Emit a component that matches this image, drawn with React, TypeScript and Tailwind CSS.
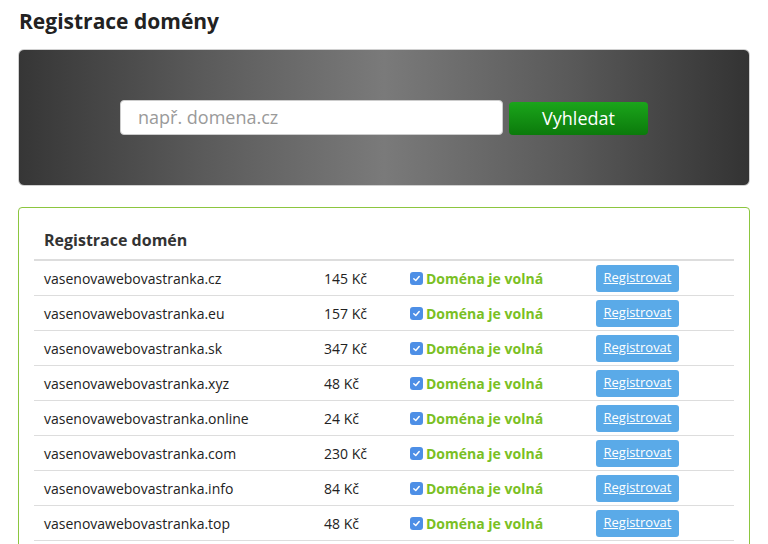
import React from 'react';

interface DomainRow {
  name: string;
  price: string;
}

const rows: DomainRow[] = [
  { name: 'vasenovawebovastranka.cz', price: '145 Kč' },
  { name: 'vasenovawebovastranka.eu', price: '157 Kč' },
  { name: 'vasenovawebovastranka.sk', price: '347 Kč' },
  { name: 'vasenovawebovastranka.xyz', price: '48 Kč' },
  { name: 'vasenovawebovastranka.online', price: '24 Kč' },
  { name: 'vasenovawebovastranka.com', price: '230 Kč' },
  { name: 'vasenovawebovastranka.info', price: '84 Kč' },
  { name: 'vasenovawebovastranka.top', price: '48 Kč' },
];

const CheckBox: React.FC = () => (
  <span className="inline-flex h-[13px] w-[13px] items-center justify-center rounded-[3px] bg-[#4d8fe6]">
    <svg width="9" height="9" viewBox="0 0 10 10" fill="none">
      <path d="M2 5.2 L4.2 7.3 L8 2.8" stroke="white" strokeWidth="1.6" strokeLinecap="round" strokeLinejoin="round" />
    </svg>
  </span>
);

const App: React.FC = () => {
  return (
    <div className="min-h-[544px] bg-white px-[18px] font-['Open_Sans',sans-serif] text-[#222]">
      {/* Title */}
      <h1 className="pt-[5px] pl-px text-[21px] font-bold leading-[32px] text-[#222]">Registrace domény</h1>

      {/* Search box */}
      <div className="mt-[12px] flex h-[137px] items-center justify-center rounded-[6px] border border-[#d0d0d0] bg-[linear-gradient(to_right,#363636,#5a5a5a_25%,#7a7a7a_50%,#5a5a5a_75%,#333333)]">
        <div className="flex items-end gap-[6px]">
          <div className="flex h-[35px] w-[383px] items-center rounded-[4px] border border-[#ccc] bg-white pl-[17px] text-[18px] text-[#9a9a9a]">
            např. domena.cz
          </div>
          <button className="h-[33px] w-[139px] rounded-[4px] bg-[linear-gradient(to_bottom,#1ba51b,#0b7a0b)] text-[18px] text-white">
            Vyhledat
          </button>
        </div>
      </div>

      {/* Results panel */}
      <div className="mt-[21px] rounded-[4px] border border-[#8cc63f] px-[15px] pt-[19px] pb-[20px]">
        <h2 className="pl-[10px] pb-[6px] text-[16px] font-bold leading-[26px] text-[#333]">Registrace domén</h2>
        <div className="border-t-2 border-[#dddddd]">
          {rows.map((row) => (
            <div
              key={row.name}
              className="grid h-[35px] grid-cols-[280px_86px_186px_1fr] items-center border-b border-[#dddddd] text-[14px] text-[#222]"
            >
              <div className="pl-[10px]">{row.name}</div>
              <div className="pl-[10px]">{row.price}</div>
              <div className="flex items-center gap-[3px] pl-[10px]">
                <CheckBox />
                <span className="font-bold text-[#7ac024]">Doména je volná</span>
              </div>
              <div className="pl-[10px]">
                <button className="h-[27px] w-[83px] rounded-[3px] bg-[#5aaae8] text-[13px] text-white underline">
                  Registrovat
                </button>
              </div>
            </div>
          ))}
        </div>
      </div>
    </div>
  );
};

export default App;
